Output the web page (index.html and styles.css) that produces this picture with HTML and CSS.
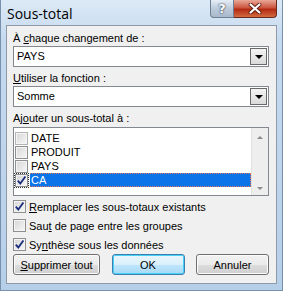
FILE: index.html
```html
<!DOCTYPE html>
<html lang="fr">

<head>
    <meta charset="UTF-8">
    <title>Sous-total</title>
    <link rel="stylesheet" href="styles.css">
</head>

<body>
    <div class="window">
        <div class="titlebar">
            <span class="title">Sous-total</span>
            <div class="controls">
                <span class="btn-help">?</span>
                <span class="btn-close">
                    <svg width="14" height="11" viewBox="0 0 14 11">
                        <path d="M2.5 1.5 L11.5 9.5 M11.5 1.5 L2.5 9.5" stroke="#5a1a10" stroke-width="3.8" stroke-linecap="round" />
                        <path d="M2.5 1.5 L11.5 9.5 M11.5 1.5 L2.5 9.5" stroke="#fff" stroke-width="2.2" stroke-linecap="round" />
                    </svg>
                </span>
            </div>
        </div>
        <div class="client">
            <div class="label first">À <u>c</u>haque changement de :</div>
            <div class="combo">
                <span class="combo-text">PAYS</span>
                <span class="combo-arrow"><i></i></span>
            </div>
            <div class="label"><u>U</u>tiliser la fonction :</div>
            <div class="combo">
                <span class="combo-text">Somme</span>
                <span class="combo-arrow"><i></i></span>
            </div>
            <div class="label">Aj<u>o</u>uter un sous-total à :</div>
            <div class="listbox">
                <ul class="items">
                    <li><span class="box faded"></span><span class="item-text">DATE</span></li>
                    <li><span class="box"></span><span class="item-text">PRODUIT</span></li>
                    <li><span class="box"></span><span class="item-text">PAYS</span></li>
                    <li class="selected">
                        <span class="box focus">
                            <svg width="11" height="11" viewBox="0 0 11 11"><path d="M1.8 5.6 L4.3 8.6 L9.4 1.4" fill="none" stroke="#1a2d7c" stroke-width="1.8" /></svg>
                        </span>
                        <span class="item-text">CA</span>
                    </li>
                </ul>
                <div class="scrollbar">
                    <span class="arrow-up"></span>
                    <span class="arrow-down"></span>
                </div>
            </div>
            <div class="options">
                <div class="opt">
                    <span class="box">
                        <svg width="11" height="11" viewBox="0 0 11 11"><path d="M1.8 5.6 L4.3 8.6 L9.4 1.4" fill="none" stroke="#1a2d7c" stroke-width="1.8" /></svg>
                    </span>
                    <span><u>R</u>emplacer les sous-totaux existants</span>
                </div>
                <div class="opt">
                    <span class="box"></span>
                    <span>Sau<u>t</u> de page entre les groupes</span>
                </div>
                <div class="opt">
                    <span class="box">
                        <svg width="11" height="11" viewBox="0 0 11 11"><path d="M1.8 5.6 L4.3 8.6 L9.4 1.4" fill="none" stroke="#1a2d7c" stroke-width="1.8" /></svg>
                    </span>
                    <span>Sy<u>n</u>thèse sous les données</span>
                </div>
            </div>
            <div class="buttons">
                <button class="push wide"><u>S</u>upprimer tout</button>
                <button class="push default">OK</button>
                <button class="push">Annuler</button>
            </div>
        </div>
    </div>
</body>

</html>
```

FILE: styles.css
```css
* {
    margin: 0;
    padding: 0;
    box-sizing: border-box
}

body {
    background: #bcd3ea;
    font-family: "Liberation Sans", Arial, sans-serif;
    font-size: 11px;
    color: #000
}

.window {
    width: 283px;
    height: 291px;
    padding: 0 5px 6px 5px;
    background: linear-gradient(to bottom, #dce9f6 0, #c5daef 40px, #b6cfe9 100%);
    border: 1px solid #7890ac;
    border-top: none;
    display: flex;
    flex-direction: column
}

.titlebar {
    position: relative;
    height: 25px;
    display: flex;
    align-items: center;
    padding: 2px 0 0 1px
}

.title {
    font-family: "Open Sans", "Liberation Sans", sans-serif;
    font-size: 14px;
    line-height: 18px
}

.controls {
    position: absolute;
    top: 0;
    right: 0;
    display: flex
}

.btn-help {
    width: 24px;
    height: 18px;
    border: 1px solid #6d7f95;
    border-top: none;
    border-radius: 0 0 0 4px;
    background: linear-gradient(to bottom, #e6edf5, #bccadb 50%, #a9b9cc);
    color: #fff;
    font: bold 13px "DejaVu Sans", sans-serif;
    text-align: center;
    line-height: 17px;
    text-shadow: 0 0 2px #2c3a4c, 0 0 1px #2c3a4c
}

.btn-close {
    width: 43px;
    height: 18px;
    border: 1px solid #6b2a20;
    border-top: none;
    border-left: none;
    border-radius: 0 0 4px 0;
    background: linear-gradient(to bottom, #e9a898, #cb563e 45%, #b32b12 55%, #d26c40);
    display: flex;
    align-items: center;
    justify-content: center
}

.client {
    flex: 1;
    background: #f0f0f0;
    border: 1px solid #8e9aa8;
    padding: 4px 7px 0 6px;
    display: flex;
    flex-direction: column
}

u {
    text-decoration: underline;
    text-underline-offset: 1px
}

.label {
    height: 16px;
    line-height: 16px;
    margin-top: 3px
}

.label.first {
    margin-top: 0
}

.combo {
    height: 21px;
    border: 1px solid #828790;
    background: #fff;
    display: flex
}

.combo-text {
    flex: 1;
    line-height: 19px;
    padding-left: 3px
}

.combo-arrow {
    width: 17px;
    margin: 1px;
    border: 1px solid #6a6a6a;
    background: linear-gradient(to bottom, #f4f4f4, #dadada);
    display: flex;
    align-items: center;
    justify-content: center
}

.combo-arrow i {
    width: 0;
    height: 0;
    border-left: 4px solid transparent;
    border-right: 4px solid transparent;
    border-top: 4px solid #000
}

.listbox {
    height: 69px;
    margin-top: 1px;
    border: 1px solid #828790;
    background: #fff;
    display: flex
}

.items {
    flex: 1;
    min-width: 0;
    list-style: none;
    padding: 3px 0 0 1px
}

.items li {
    height: 14px;
    display: flex;
    align-items: center;
    gap: 2px
}

.item-text {
    flex: 1;
    height: 14px;
    line-height: 14px;
    padding-left: 1px
}

.selected .item-text {
    background: #0a74e8;
    color: #fff;
    border: 1px dotted #e07850;
    border-left: none;
    line-height: 12px
}

.box {
    width: 13px;
    height: 13px;
    border: 1px solid #8e8f8f;
    box-shadow: inset 0 0 0 1px #f4f4f4;
    background: linear-gradient(135deg, #d6d6d6, #f7f7f7);
    flex: none;
    display: inline-flex;
    align-items: center;
    justify-content: center
}

.box.faded {
    border-color: #b4b4b4
}

.box.focus {
    outline: 1px dotted #333;
    outline-offset: 0
}

.scrollbar {
    flex: none;
    width: 17px;
    background: #eeeeee;
    border-left: 1px solid #e0e0e0;
    display: flex;
    flex-direction: column;
    justify-content: space-between;
    align-items: center;
    padding: 8px 0 5px
}

.arrow-up {
    border-left: 3px solid transparent;
    border-right: 3px solid transparent;
    border-bottom: 3px solid #8a8a8a
}

.arrow-down {
    border-left: 3px solid transparent;
    border-right: 3px solid transparent;
    border-top: 3px solid #8a8a8a
}

.options {
    display: flex;
    flex-direction: column;
    gap: 6px;
    padding-top: 4px
}

.opt {
    display: flex;
    align-items: center;
    height: 13px;
    gap: 3px
}

.buttons {
    display: flex;
    justify-content: space-between;
    margin-top: 3px
}

.push {
    width: 73px;
    height: 21px;
    font: 11px "Liberation Sans", Arial, sans-serif;
    border: 1px solid #707070;
    border-radius: 3px;
    box-shadow: inset 0 0 0 1px #fcfcfc;
    background: linear-gradient(to bottom, #f2f2f2 0, #ebebeb 50%, #dddddd 51%, #cfcfcf 100%);
    color: #000
}

.push.wide {
    width: 87px
}

.push.default {
    border-color: #3c7fb1;
    box-shadow: inset 0 0 0 1px #48d0f7;
    background: linear-gradient(to bottom, #eaf6fd 0, #d9f0fc 50%, #bee6fd 51%, #a7d9f5 100%)
}
```
